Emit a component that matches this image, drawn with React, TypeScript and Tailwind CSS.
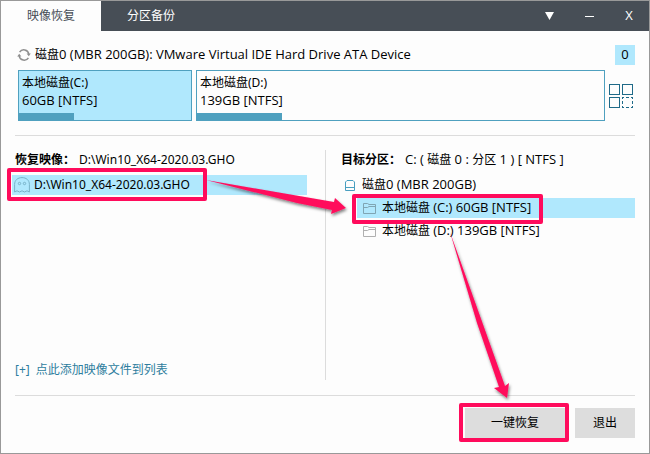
import { useState } from "react";
import type { ReactNode } from "react";

const windowFont = "font-['Noto_Sans','Noto_Sans_CJK_SC',sans-serif]";

function Latin({ children }: { children: ReactNode }) {
  return <span className="font-['Open_Sans',sans-serif] text-[13px] leading-none">{children}</span>;
}

function RefreshIcon() {
  return (
    <svg width="14" height="14" viewBox="0 0 14 14" fill="none" stroke="#8f8f8f" strokeWidth="1.5" aria-hidden="true">
      <path d="M2.600 4.200A5 5 0 0 1 11.800 6M11.400 9.800A5 5 0 0 1 2.200 8" />
      <path d="M9.600 5.400h4.200L11.800 8.200zM4.400 8.600H.2L2.200 5.800z" fill="#8f8f8f" stroke="none" />
    </svg>
  );
}

function GridIcon() {
  return (
    <svg width="24" height="24" viewBox="0 0 24 24" fill="none" stroke="#1f6a88" shapeRendering="crispEdges" aria-hidden="true">
      <rect x="0.5" y="0.5" width="10" height="10" />
      <rect x="13.5" y="0.5" width="10" height="10" />
      <rect x="0.5" y="13.5" width="10" height="10" />
      <path d="M13 13.5h2m2 0h3m2 0h2M13 23.5h2m2 0h3m2 0h2M13.5 13v2m0 2v3m0 2v2M23.5 13v2m0 2v3m0 2v2" />
    </svg>
  );
}

function GhostIcon() {
  return (
    <svg width="16" height="16" viewBox="0 0 16 16" fill="none" stroke="#78b2c8" aria-hidden="true">
      <path d="M.6 15V7.5C.6 3.2 3.7.6 8 .6s7.400 2.600 7.400 6.900V15l-2.400-1.200L10.500 15 8 13.800 5.500 15 3 13.800z" />
      <circle cx="5.500" cy="6.500" r="1.200" />
      <circle cx="10.500" cy="6.500" r="1.200" />
    </svg>
  );
}

function DriveIcon() {
  return (
    <svg width="10" height="11" viewBox="0 0 10 11" fill="none" stroke="#4a9fc0" aria-hidden="true">
      <path d="M.5 10.500V2L2 .5h6L9.500 2v8.500zM.5 7.500h9" />
    </svg>
  );
}

function FolderIcon({ selected }: { selected: boolean }) {
  return (
    <svg width="13" height="11" viewBox="0 0 13 11" fill="none" stroke={selected ? "#7fa5b3" : "#b0b0b0"} aria-hidden="true">
      <path d="M.5 10.500V.5h4l1.500 1h6.500v9zM.5 4.500h4l1.500-1h6.500" />
    </svg>
  );
}

function DiskCard({ name, size, selected, barClass }: { name: string; size: string; selected: boolean; barClass: string }) {
  return (
    <button
      type="button"
      className={`flex flex-col overflow-hidden border border-[#4fa0bf] text-left ${selected ? "bg-[#b0e8fd]" : "bg-[#fdfdfd]"}`}
    >
      <span className="px-[3px] pt-[3px] leading-[18px]">{name}</span>
      <span className="px-[3px] leading-[18px]"><Latin>{size}</Latin></span>
      <span className={`mt-auto h-[7px] bg-[#4fa0bf] ${barClass}`} />
    </button>
  );
}

function Annotations() {
  return (
    <svg className="pointer-events-none absolute -top-px -left-px" width="650" height="454" viewBox="0 0 650 454" fill="none" aria-hidden="true">
      <defs>
        <filter id="shadow" x="-20%" y="-20%" width="140%" height="140%">
          <feDropShadow dx="1" dy="2" stdDeviation="1.500" floodColor="#000" floodOpacity="0.5" />
        </filter>
      </defs>
      <g stroke="#ff0b5c" strokeWidth="4" strokeLinejoin="round">
        <rect x="9" y="170" width="196" height="29" />
        <rect x="354" y="196" width="187" height="26" />
        <rect x="461" y="405" width="106" height="35" />
      </g>
      <g fill="#ff0b5c" filter="url(#shadow)">
        <path d="M206 180L334 202L335 198L346 208L331 214L332 210L297 203Z" />
        <path d="M450 232L505 386L509 383L507 398L494 388L499 387L477 323Z" />
      </g>
    </svg>
  );
}

export default function App() {
  const [tab, setTab] = useState(0);
  const [target, setTarget] = useState(0);
  const tabs = ["映像恢复", "分区备份"];
  const partitions = ["(C:) 60GB [NTFS]", "(D:) 139GB [NTFS]"];

  return (
    <div className={`relative flex min-h-screen flex-col border border-[#999999] bg-[#fdfdfd] text-[12px] leading-5 text-black ${windowFont}`}>
      <header className="flex h-[30px] bg-[#474e56] text-white">
        <nav className="flex">
          {tabs.map((label, i) => (
            <button
              key={label}
              type="button"
              onClick={() => setTab(i)}
              className={`w-[100px] ${tab === i ? "bg-[#fdfdfd] text-[#474e56]" : ""}`}
            >
              {label}
            </button>
          ))}
        </nav>
        <div className="ml-auto flex">
          <button type="button" aria-label="菜单" className="flex w-10 items-center justify-center">
            <svg width="9" height="8" viewBox="0 0 9 8" fill="currentColor" aria-hidden="true"><path d="M0 0h9L4.500 8z" /></svg>
          </button>
          <button type="button" aria-label="最小化" className="flex w-10 items-center justify-center">
            <span className="h-px w-[9px] bg-white" />
          </button>
          <button type="button" className="w-10"><Latin>X</Latin></button>
        </div>
      </header>

      <main className="flex grow flex-col px-[14px] pt-[14px] pb-[15px]">
        <div className="flex h-5 items-center gap-1 pl-[2px]">
          <RefreshIcon />
          <h1 className="grow">磁盘<Latin>0 (MBR 200GB): VMware Virtual IDE Hard Drive ATA Device</Latin></h1>
          <span className="w-5 bg-[#b0e8fd] text-center"><Latin>0</Latin></span>
        </div>

        <div className="mt-[5px] flex items-center gap-1 pr-[2px] pl-[3px]">
          <div className="grid h-[51px] grow grid-cols-[174fr_409fr] gap-1">
            <DiskCard name="本地磁盘(C:)" size="60GB [NTFS]" selected barClass="w-[32%]" />
            <DiskCard name="本地磁盘(D:)" size="139GB [NTFS]" selected={false} barClass="w-[21%]" />
          </div>
          <button type="button" aria-label="分区视图"><GridIcon /></button>
        </div>

        <section className="mt-[14px] grid grow grid-cols-2 border-y border-[#dcdcdc] pt-[14px] pb-[15px]">
          <div className="flex flex-col">
            <h2 className="flex h-5 gap-1"><b>恢复映像：</b>D:\Win10_X64-2020.03.GHO</h2>
            <button type="button" className="mt-[5px] mr-[18px] -ml-[3px] flex h-5 items-center gap-1 bg-[#b0e8fd] pl-[2px] text-left">
              <GhostIcon />
              D:\Win10_X64-2020.03.GHO
            </button>
            <a href="#add" className="mt-auto flex gap-[6px] self-start text-[#2e7d9e]"><span>[+]</span>点此添加映像文件到列表</a>
          </div>
          <div className="border-l border-[#dcdcdc] pl-[15px]">
            <h2 className="flex h-5 gap-1">
              <b>目标分区：</b>
              <span><Latin>C: ( </Latin>磁盘<Latin> 0 : </Latin>分区<Latin> 1 ) [ NTFS ]</Latin></span>
            </h2>
            <div className="mt-[5px] flex h-5 items-center gap-[7px] pl-1">
              <DriveIcon />
              <span>磁盘<Latin>0 (MBR 200GB)</Latin></span>
            </div>
            <ul className="mt-[3px] ml-4 flex flex-col gap-[3px]">
              {partitions.map((label, i) => (
                <li key={label}>
                  <button
                    type="button"
                    onClick={() => setTarget(i)}
                    className={`flex h-5 w-full items-center gap-[6px] pl-[6px] text-left ${target === i ? "bg-[#b0e8fd]" : ""}`}
                  >
                    <FolderIcon selected={target === i} />
                    <span>本地磁盘 <Latin>{label}</Latin></span>
                  </button>
                </li>
              ))}
            </ul>
          </div>
        </section>

        <footer className="mt-3 flex justify-end gap-[10px]">
          <button type="button" className="h-[30px] w-[100px] bg-[#dddddd]">一键恢复</button>
          <button type="button" className="h-[30px] w-[60px] bg-[#dddddd]">退出</button>
        </footer>
      </main>

      <Annotations />
    </div>
  );
}
